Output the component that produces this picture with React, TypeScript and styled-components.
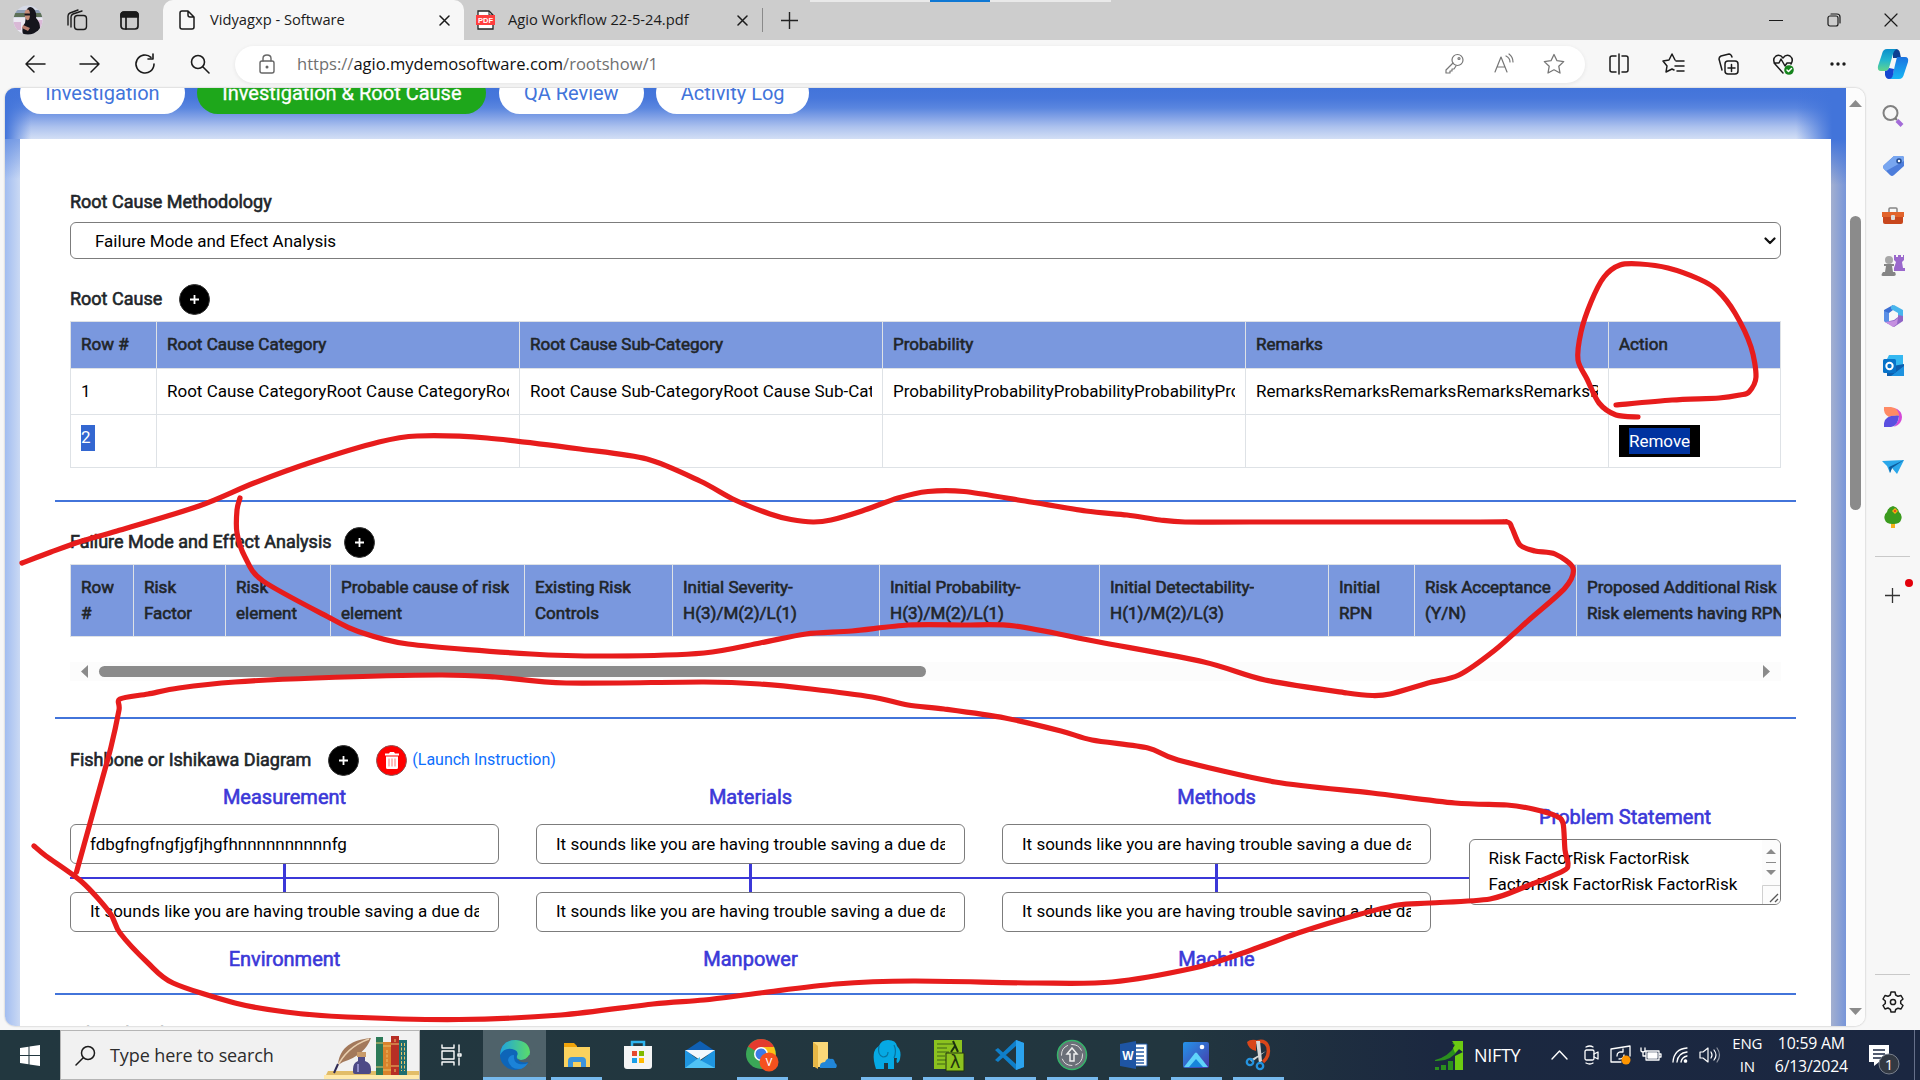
import React from "react";
import styled, { createGlobalStyle } from "styled-components";

const ui = `"Open Sans", "Noto Sans", sans-serif`;
const blue = "#4274da";
const ink = "#3b38d8";

const Global = createGlobalStyle`
  * { box-sizing: border-box; }
  html, body { margin: 0; padding: 0; overflow: hidden; }
  body { font-family: Roboto, "Liberation Sans", sans-serif; font-size: 17px; line-height: 26px; color: #212529; }
`;

const Screen = styled.div`
  position: relative;
  width: 1920px;
  height: 1080px;
  overflow: hidden;
  display: flex;
  flex-direction: column;
  background: #f7f7f7;
`;

/* ---------- browser chrome ---------- */
const TabStrip = styled.header`
  flex: none;
  height: 40px;
  background: #cdcdcd;
  display: flex;
  align-items: center;
  font-family: ${ui};
  color: #1b1b1b;
`;
const StripTools = styled.div`
  width: 163px;
  height: 40px;
  padding-left: 13px;
  display: flex;
  align-items: center;
  gap: 23px;
  svg:last-child { margin-left: 8px; }
`;
const Tab = styled.div<{ $w: number; $active?: boolean }>`
  width: ${(p) => p.$w}px;
  height: 40px;
  display: flex;
  align-items: center;
  padding: 0 14px 0 ${(p) => (p.$active ? 14 : 12)}px;
  background: ${(p) => (p.$active ? "#f7f7f7" : "transparent")};
  border-radius: 10px 10px 0 0;
  svg { flex: none; }
`;
const TabTitle = styled.span`
  flex: 1;
  margin: -2px 0 0 13px;
  font-size: 14.7px;
  white-space: nowrap;
`;
const StripRule = styled.div`
  width: 1px;
  height: 24px;
  margin-right: 18px;
  background: #8a8a8a;
`;
const LoadBar = styled.div`
  align-self: flex-start;
  width: 301px;
  height: 2px;
  margin-left: 12px;
  background: linear-gradient(to right, #e9e9e9 120px, #0f78d4 120px 180px, #e9e9e9 180px);
`;
const WindowKeys = styled.div`
  margin-left: auto;
  padding-right: 22px;
  display: flex;
  align-items: center;
  gap: 43.5px;
`;
const Toolbar = styled.div`
  flex: none;
  height: 48px;
  display: flex;
  align-items: center;
  background: #f7f7f7;
  font-family: ${ui};
`;
const NavKeys = styled.div`
  width: 235px;
  padding-left: 24px;
  display: flex;
  align-items: center;
  gap: 33px;
`;
const Address = styled.div`
  width: 1350px;
  height: 37px;
  border-radius: 19px;
  background: #fff;
  box-shadow: 0 1px 4px rgba(0, 0, 0, 0.08);
  display: flex;
  align-items: center;
  padding: 0 20px 0 22px;
`;
const Url = styled.span`
  flex: 1;
  margin-left: 20px;
  font-size: 16.55px;
  color: #707070;
  b { font-weight: 400; color: #111; }
`;
const AddressTools = styled.div`
  display: flex;
  gap: 28px;
`;
const ToolKeys = styled.div`
  margin-left: auto;
  display: grid;
  grid-template-columns: repeat(6, 54.7px);
  align-items: center;
  justify-items: center;
`;

/* ---------- middle ---------- */
const Middle = styled.div`
  flex: none;
  height: 942px;
  display: flex;
  padding-left: 5px;
`;
const Viewport = styled.main`
  width: 1860px;
  height: 938px;
  border-radius: 10px;
  overflow: hidden;
  display: flex;
  background: #fff;
  box-shadow: 0 0 2px rgba(0, 0, 0, 0.3);
`;
const Page = styled.div`
  width: 1841px;
  height: 938px;
  overflow: hidden;
`;
const TopBand = styled.div`
  height: 51px;
  background:
    linear-gradient(to right, ${blue} 0, rgba(66, 116, 218, 0) 26px),
    linear-gradient(to left, ${blue} 14px, rgba(66, 116, 218, 0.75) 24px, rgba(66, 116, 218, 0) 50px),
    linear-gradient(to bottom, ${blue} 0, #4777db 10px, #5a86df 20px, #81a1e6 29px, #adc2ee 39px, #d3dff5 51px);
`;
const Pills = styled.nav`
  height: 26px;
  padding-left: 15px;
  display: flex;
  align-items: flex-end;
  gap: 12.4px;
  overflow: hidden;
`;
const Pill = styled.div<{ $w: number; $on?: boolean }>`
  flex: none;
  width: ${(p) => p.$w}px;
  height: 42px;
  border-radius: 21px;
  display: flex;
  align-items: center;
  justify-content: center;
  font-size: 20px;
  white-space: nowrap;
  background: ${(p) => (p.$on ? "#1ea71b" : "#fff")};
  color: ${(p) => (p.$on ? "#fff" : blue)};
  -webkit-text-stroke: ${(p) => (p.$on ? 0.3 : 0)}px currentColor;
`;
const Body = styled.div`
  display: flex;
  height: 887px;
`;
const Edge = styled.div<{ $side: "l" | "r" }>`
  width: 15px;
  background: ${(p) =>
    p.$side === "l"
      ? "linear-gradient(to bottom, rgba(66,116,218,.55) 0, rgba(66,116,218,0) 40px), linear-gradient(to right, #a2bdf0, #cad9f4)"
      : `linear-gradient(to bottom, ${blue} 0, rgba(66,116,218,0) 46px), linear-gradient(to right, #a3b0d0, #7795d9)`};
`;
const Card = styled.section`
  width: 1811px;
  background: #fff;
  padding: 50px 35px 0;
`;
const Part = styled.div<{ $h: number; $top?: number }>`
  height: ${(p) => p.$h}px;
  padding: ${(p) => p.$top ?? 0}px 15px 0;
`;
const Rule = styled.div`
  height: 2px;
  background: ${blue};
`;
const Heading = styled.div`
  font-size: 18px;
  color: #212529;
  -webkit-text-stroke: 0.6px currentColor;
  white-space: nowrap;
`;
const HeadRow = styled.div`
  display: flex;
  align-items: center;
  height: 30px;
`;
const Round = styled.div<{ $ml: number; $red?: boolean }>`
  width: 31px;
  height: 31px;
  margin-left: ${(p) => p.$ml}px;
  border-radius: 50%;
  border: 1px solid ${(p) => (p.$red ? "#8d5555" : "#333")};
  background: ${(p) => (p.$red ? "#f00" : "#000")};
  display: flex;
  align-items: center;
  justify-content: center;
`;
const Launch = styled.a`
  margin-left: 5px;
  color: #0d6efd;
  font-size: 16px;
`;
const Select = styled.div`
  height: 37px;
  margin: 7px 0 25px;
  border: 1px solid #7c7c7c;
  border-radius: 6px;
  display: flex;
  align-items: center;
  justify-content: space-between;
  padding: 0 4px 0 24px;
  color: #000;
`;
const Grid = styled.div<{ $cols: string; $top: number }>`
  display: grid;
  grid-template-columns: ${(p) => p.$cols};
  margin-top: ${(p) => p.$top}px;
  border-left: 1px solid #dee2e6;
  border-top: 1px solid #dee2e6;
  overflow: hidden;
`;
const Cell = styled.div<{ $h: number; $head?: boolean; $top?: boolean }>`
  height: ${(p) => p.$h}px;
  min-width: 0;
  padding: ${(p) => (p.$top ? "10px 10px 0" : "0 10px 2px")};
  border-right: 1px solid #dee2e6;
  border-bottom: 1px solid #dee2e6;
  display: flex;
  align-items: ${(p) => (p.$top ? "flex-start" : "center")};
  background: ${(p) => (p.$head ? "#7a98de" : "#fff")};
  color: ${(p) => (p.$head ? "#212529" : "#000")};
  -webkit-text-stroke: ${(p) => (p.$head ? 0.6 : 0)}px currentColor;
`;
const Clip = styled.span`
  overflow: hidden;
  white-space: nowrap;
`;
const Picked = styled.span`
  width: 14px;
  height: 26px;
  line-height: 25px;
  background: #3367d1;
  color: #fff;
`;
const Remove = styled.button`
  width: 81px;
  height: 32px;
  padding: 0;
  border: 0;
  background: #000;
  font: inherit;
  color: #fff;
  span { display: inline-block; height: 26px; background: #0033a0; }
`;
const HScroll = styled.div`
  height: 19px;
  margin-top: 25px;
  padding: 0 11px;
  display: flex;
  align-items: center;
  background: #fcfcfc;
`;
const HThumb = styled.div`
  width: 827px;
  height: 11px;
  margin: 0 auto 0 11px;
  border-radius: 6px;
  background: #8b8b8b;
`;
const Fish = styled.div`
  display: flex;
  margin-top: 9px;
`;
const Bones = styled.div`
  width: 1399px;
`;
const Triple = styled.div<{ $h: number }>`
  height: ${(p) => p.$h}px;
  display: grid;
  grid-template-columns: repeat(3, 429px);
  column-gap: 37px;
`;
const Label = styled.div`
  font-size: 20px;
  line-height: 26px;
  text-align: center;
  color: ${ink};
  -webkit-text-stroke: 0.6px currentColor;
`;
const Field = styled.div<{ $lift?: boolean }>`
  height: 40px;
  border: 1px solid #7c7c7c;
  border-radius: 6px;
  padding: ${(p) => (p.$lift ? 5 : 6)}px 19px;
  color: #000;
  display: flex;
`;
const Spine = styled.div`
  height: 28px;
  display: grid;
  grid-template-columns: repeat(3, 429px);
  column-gap: 37px;
  background: linear-gradient(${ink}, ${ink}) 0 13px / 100% 2px no-repeat;
`;
const Rib = styled.div`
  justify-self: center;
  width: 3px;
  background: ${ink};
`;
const Head = styled.div`
  width: 312px;
  padding-top: 20px;
`;
const Area = styled.div`
  display: flex;
  height: 66px;
  margin-top: 9px;
  border: 1px solid #7c7c7c;
  border-radius: 6px;
  overflow: hidden;
  color: #000;
`;
const AreaText = styled.div`
  width: 292px;
  padding: 4.5px 0 0 18.5px;
`;
const AreaBar = styled.div`
  width: 18px;
  height: 64px;
  background: #fcfcfc;
`;
const VScroll = styled.div`
  width: 19px;
  background: #fcfcfc;
  display: flex;
  flex-direction: column;
  align-items: center;
  padding: 12px 0 11px;
`;
const VThumb = styled.div`
  flex: none;
  width: 11px;
  height: 294px;
  margin: 109px 0 auto;
  border-radius: 6px;
  background: #8b8b8b;
`;
const Sidebar = styled.aside`
  width: 55px;
  display: flex;
  flex-direction: column;
  align-items: center;
  padding-top: 16px;
`;
const SideItem = styled.div`
  flex: none;
  height: 24px;
  margin-bottom: 26.1px;
`;
const SideRule = styled.div<{ $top: number; $bottom: number }>`
  flex: none;
  width: 35px;
  height: 1px;
  margin: ${(p) => p.$top}px 0 ${(p) => p.$bottom}px;
  background: #c9c9c9;
`;
const AddItem = styled.div`
  position: relative;
  flex: none;
  width: 15px;
  height: 15px;
  svg { display: block; }
  &::after {
    content: "";
    position: absolute;
    top: -9px;
    left: 20px;
    width: 8px;
    height: 8px;
    border-radius: 50%;
    background: #e3000b;
  }
`;

/* ---------- taskbar ---------- */
const Taskbar = styled.footer`
  flex: none;
  height: 50px;
  display: flex;
  align-items: center;
  background: linear-gradient(to right, #22373f 0, #22363f 1180px, #1b2840 1440px, #1b2741);
  font-family: ${ui};
  color: #fff;
`;
const Start = styled.div`
  width: 60px;
  display: flex;
  justify-content: center;
`;
const SearchBox = styled.div`
  width: 360px;
  height: 50px;
  background: #f1f1f1;
  border: 1px solid #b5b5b5;
  display: flex;
  align-items: center;
  padding-left: 14px;
  color: #2c2c2c;
  font-size: 18px;
  span { margin-left: 14px; flex: 1; letter-spacing: -0.1px; white-space: nowrap; }
`;
const Task = styled.div<{ $w?: number; $open?: boolean; $hot?: boolean }>`
  flex: none;
  width: ${(p) => p.$w ?? 62}px;
  height: 50px;
  display: flex;
  align-items: center;
  justify-content: center;
  background:
    linear-gradient(#76b9ed, #76b9ed) 50% 100% / ${(p) => (p.$hot ? "100%" : "51px")} ${(p) => (p.$open ? 3 : 0)}px no-repeat,
    ${(p) => (p.$hot ? "#4f626a" : "transparent")};
`;
const Ticker = styled.div`
  margin-left: 146px;
  display: flex;
  align-items: center;
  gap: 10px;
  font-size: 18px;
  span { letter-spacing: -0.3px; }
`;
const Tray = styled.div`
  margin-left: 31px;
  display: flex;
  align-items: center;
  gap: 8.6px;
  svg:first-child { margin-right: 4px; }
`;
const Stack = styled.div<{ $w: number; $ml: number; $size: number }>`
  flex: none;
  width: ${(p) => p.$w}px;
  margin-left: ${(p) => p.$ml}px;
  text-align: center;
  font-size: ${(p) => p.$size}px;
  line-height: 23px;
  letter-spacing: -0.2px;
  white-space: nowrap;
`;
const Notice = styled.div`
  margin-left: auto;
  margin-right: 5px;
  height: 50px;
  width: 46px;
  border-right: 1px solid #66708a;
`;
const Ink = styled.svg`
  position: absolute;
  inset: 0;
  pointer-events: none;
`;

/* ---------- drawings ---------- */
type IcoProps = { w?: number; h?: number; c?: string; s?: number; box?: string; children: React.ReactNode };
const Ico = ({ w = 20, h = w, c = "#1b1b1b", s = 1.4, box, children }: IcoProps) => (
  <svg width={w} height={h} viewBox={box ?? `0 0 ${w} ${h}`} fill="none" stroke={c} strokeWidth={s} strokeLinecap="round" strokeLinejoin="round">
    {children}
  </svg>
);
const Plus = ({ size = 9, c = "#fff", s = 1.8 }) => (
  <Ico w={size} c={c} s={s}><path strokeLinecap="butt" d={`M${size / 2} 0V${size}M0 ${size / 2}H${size}`} /></Ico>
);
const Cross = () => <Ico w={11} s={1.5}><path d="M1 1l9 9M10 1l-9 9" /></Ico>;
const Arrow = ({ dir }: { dir: "u" | "d" | "l" | "r" }) => {
  const d = { u: "M6.5 0L13 7H0z", d: "M6.5 7L13 0H0z", l: "M0 6.5L7 0V13z", r: "M7 6.5L0 0V13z" }[dir];
  const flat = dir === "u" || dir === "d";
  return <svg width={flat ? 13 : 7} height={flat ? 7 : 13}><path d={d} fill="#8b8b8b" /></svg>;
};
const Avatar = () => (
  <svg width="30" height="30" viewBox="0 0 30 30">
    <defs><clipPath id="av"><circle cx="15" cy="15" r="14.5" /></clipPath></defs>
    <g clipPath="url(#av)">
      <path fill="#d5d9e6" d="M0 0h30v30H0z" />
      <path fill="#5d7158" d="M0 8h30v4H0z" /><path fill="#8fa0b8" d="M0 5h30v3H0z" /><path fill="#ece8f2" d="M0 13h30v17H0z" />
      <path fill="#d9b9d6" d="M0 17h8v8H0zM25 15h5v8h-5z" />
      <path fill="#15151c" d="M10 30q-2-8 2-12l2-14q3-4 7 0 3 4 2 9 4 4 4 10l-2 7z" />
      <path fill="#c58d78" d="M12 6c3-3 5-1 5 3s-1 7-3 6-3-6-2-9z" />
      <path fill="#15151c" d="M11.500 8.500h5.500v2h-5.500z" /><path fill="#b97e6e" d="M10 20l7 3-2 3-6-3z" />
    </g>
  </svg>
);

const Trash = () => (
  <svg width="14" height="17" viewBox="0 0 14 17">
    <path fill="#fff" d="M0 1.5h4L5 0h4l1 1.5h4v2H0zM1 4.5h12V15.5Q13 17 11.500 17h-9Q1 17 1 15.500z" />
    <path stroke="#f77" d="M4 6.500v8M7 6.500v8M10 6.500v8" />
  </svg>
);

const sideIcons: React.ReactNode[] = [
  <><circle cx="9.500" cy="9" r="7" fill="none" stroke="#808080" strokeWidth="2" /><path d="M14 14l2 2" stroke="#777" strokeWidth="2" /><path d="M16 16.500l5 5" stroke="#a36bd8" strokeWidth="4" /></>,
  <><path fill="#4d7ddb" d="M13 2h8q2 0 2 2v8L13 21q-2 2-4 0l-6-6q-2-2 0-4z" /><path fill="#78a6f0" d="M13 2h8q2 0 2 2v3L5 17l-2-2q-2-2 0-4z" /><circle cx="18" cy="7" r="2" fill="#fff" stroke="#234b91" strokeWidth="1.500" /></>,
  <><path d="M8 8V5q0-1 1-1h6q1 0 1 1v3" fill="none" stroke="#858585" strokeWidth="1.500" /><path fill="#e2642c" d="M1 8h22v5H1z" /><path fill="#c8471d" d="M2 13h20v5q0 2-2 2H4q-2 0-2-2z" /><rect x="10" y="11" width="4" height="5" rx="1" fill="#ddd" /></>,
  <><circle cx="8" cy="6" r="4" fill="#a7a7a7" /><path fill="#858585" d="M3 10h10v2h-2l1 6h2q2 4-1 4H2q-3 0 0-4h2l1-6H3z" /><path fill="#9a68cc" d="M13 1h2v2h2V1h3v2h2V1h1v5l-2 2 1 6h2v3H13v-3l2-6-2-2z" /></>,
  <><path fill="#3c6fd3" d="M12 1L3 6v11l5 3V9l4-3z" /><path fill="#48b5ed" d="M10 2l3-1 9 5v8l-5-3V9l-7-4z" /><path fill="#9065c6" d="M22 12v5l-9 6-9-5 9-2 4-3v-2z" /><path fill="#5a8fe6" d="M3 7l5 2v11l-5-3z" /><path fill="#c58fe0" d="M4 18l9-1 4-3-1 6-4 3z" /></>,
  <><path fill="#35b8f1" d="M8 1h14v20H6V5z" /><path fill="#0f5fae" d="M6 13l17-3v12H6z" /><path fill="#1e92df" d="M10 22l13-10v10z" /><rect x="2" y="5" width="13" height="14" rx="1.500" fill="#0873c9" /><circle cx="8.500" cy="12" r="3.200" fill="none" stroke="#fff" strokeWidth="2" /></>,
  <><path fill="#ff8a65" d="M3 2h7q8 1 10 9-9-1-12 1Q2 9 3 2z" /><path fill="#d548d8" d="M14 3q7 3 7 9 0 7-8 10 5-6 5-11 0-5-4-8z" /><path fill="#5a4fe0" d="M3 22q-1-9 7-11 8-1 8 0-1 10-8 11z" /></>,
  <><path fill="#2aa7ea" d="M1 6l22-1-7 14-5-6-2 5-3-7z" /><path fill="#0e5c9e" d="M23 5L8 12l1 6 2-5z" /></>,
  <><path fill="#f7b21b" d="M10 17h4v6h-4z" /><path fill="#3b9b1e" d="M12 1q5 1 6 6 4 3 2 8-1 4-8 4t-8-4q-2-5 2-8 1-5 6-6z" /><path fill="#f5b80f" d="M14 3l3 3-3 3-3-3z" /><circle cx="14" cy="6" r="1.300" fill="#e8501f" /></>,
];

type Pt = [number, number];
const smooth = (pts: Pt[]) => {
  let d = `M${pts[0][0]} ${pts[0][1]}`;
  for (let i = 0; i < pts.length - 1; i++) {
    const a = pts[i - 1] ?? pts[i], b = pts[i], c = pts[i + 1], e = pts[i + 2] ?? c;
    d += `C${b[0] + (c[0] - a[0]) / 7} ${b[1] + (c[1] - a[1]) / 7} ${c[0] - (e[0] - b[0]) / 7} ${c[1] - (e[1] - b[1]) / 7} ${c[0]} ${c[1]}`;
  }
  return d;
};
const strokes: Pt[][] = [
  [[1616, 405], [1672, 400], [1719, 398], [1740, 395], [1749, 392], [1756, 377], [1751, 347], [1735, 313], [1717, 290], [1699, 279], [1668, 268], [1640, 264], [1620, 265], [1604, 277], [1591, 302], [1581, 332], [1578, 360], [1587, 379], [1599, 403], [1616, 415], [1638, 417]],
  [[22, 563], [51, 552], [82, 541], [117, 531], [199, 506], [254, 483], [312, 462], [379, 442], [417, 436], [487, 438], [580, 449], [647, 459], [700, 481], [735, 500], [770, 514], [791, 519.500], [813, 522], [831, 520], [862, 511], [898, 498], [928, 491.500], [964, 491.500], [1025, 501], [1086, 511], [1127, 515], [1160, 520], [1185, 522], [1250, 522], [1480, 522], [1507, 522], [1512, 528], [1520, 545], [1535, 551], [1555, 554], [1573, 568], [1565, 588], [1530, 619], [1495, 650], [1459, 675], [1428, 683], [1390, 694], [1372, 695.500], [1347, 693], [1265, 680], [1204, 662], [1099, 642], [1015, 626], [964, 625], [908, 625], [852, 631], [806, 634], [760, 643], [704, 653], [612, 656], [531, 654], [408, 644], [357, 631], [332, 619], [263, 581], [245, 557], [237, 533], [237, 510], [240, 498]],
  [[76.500, 872], [89, 827], [102, 780], [111, 747], [119, 710], [120, 699], [148, 694], [179, 688], [235, 682], [316, 678], [439, 675], [495, 677], [566, 683], [704, 682], [760, 684], [811, 689], [872, 697], [908, 705], [944, 709], [1005, 718], [1061, 731], [1092, 740], [1148, 748], [1178, 760], [1275, 782], [1372, 793], [1455, 803], [1507, 805], [1533, 809], [1556, 816], [1563, 823], [1565, 850], [1568, 864], [1563, 871], [1527, 886], [1490, 899], [1430, 903], [1398, 905], [1357, 915], [1301, 932], [1240, 954], [1194, 968], [1112, 982], [1035, 983], [913, 981], [836, 984], [760, 993], [704, 1000], [653, 1004], [561, 1015], [459, 1019.500], [347, 1017], [286, 1012], [235, 1003], [173, 983], [148, 963], [120, 933], [110, 913], [82, 882], [46, 856], [34, 846]],
];

const rep = (s: string, n: number) => s.repeat(n);
const due = "It sounds like you are having trouble saving a due date";
const fmea: [string, string][] = [
  ["Row", "#"], ["Risk", "Factor"], ["Risk", "element"], ["Probable cause of risk", "element"], ["Existing Risk", "Controls"],
  ["Initial Severity-", "H(3)/M(2)/L(1)"], ["Initial Probability-", "H(3)/M(2)/L(1)"], ["Initial Detectability-", "H(1)/M(2)/L(3)"],
  ["Initial", "RPN"], ["Risk Acceptance", "(Y/N)"], ["Proposed Additional Risk", "Risk elements having RPN"],
];

const T = ({ children }: { children: React.ReactNode }) => <svg width="38" height="38" viewBox="0 0 38 38">{children}</svg>;

export default function App() {
  return (
    <Screen>
      <Global />
      <TabStrip>
        <StripTools>
          <Avatar />
          <Ico w={23}><rect x="8.500" y="6.500" width="12" height="14" rx="3" /><path d="M5 18V8q0-2 2-3l9-3M2 16V7q0-2 2-3l8-3" /></Ico>
          <Ico w={19} s={1.7}><rect x="1" y="1" width="17" height="17" rx="3" /><path d="M1 4q0-3 3-3h11q3 0 3 3v2H1z" fill="#1b1b1b" /><path d="M6 6v12" /></Ico>
        </StripTools>
        <Tab $w={301} $active>
          <Ico w={20} h={20} s={1.5}><path d="M3 3q0-2 2-2h6l6 6v10q0 2-2 2H5q-2 0-2-2zM11 1v4q0 2 2 2h4" /></Ico>
          <TabTitle>Vidyagxp - Software</TabTitle>
          <Cross />
        </Tab>
        <Tab $w={298}>
          <svg width="19" height="20"><path d="M2 1h11l4 4v14H2z" fill="#fff" stroke="#222" strokeWidth="1.300" /><path d="M13 1v4h4" stroke="#222" fill="none" /><path fill="#ff3e3e" d="M0 5h19v10H0z" /><text x="2" y="13" fontSize="7.500" fontWeight="700" fontFamily="Liberation Sans" fill="#fff">PDF</text></svg>
          <TabTitle>Agio Workflow 22-5-24.pdf</TabTitle>
          <Cross />
        </Tab>
        <StripRule />
        <Plus size={17} c="#222" s={1.4} />
        <LoadBar />
        <WindowKeys>
          <Ico w={14} s={1}><path d="M0 7.500h14" /></Ico>
          <Ico w={14} s={1.200}><rect x="1" y="3" width="10" height="10" rx="2" /><path d="M4 1h6q3 0 3 3v6" /></Ico>
          <Ico w={14} s={1.200}><path d="M1 1l12 12M13 1L1 13" /></Ico>
        </WindowKeys>
      </TabStrip>
      <Toolbar>
        <NavKeys>
          <Ico w={22} s={1.500}><path d="M21 11H2M10 3l-8 8 8 8" /></Ico>
          <Ico w={22} s={1.500}><path d="M1 11h19M12 3l8 8-8 8" /></Ico>
          <Ico w={22} s={1.600}><path d="M20 11a9 9 0 1 1-3-6.700M19 1v5h-5" /></Ico>
          <Ico w={22} s={1.600}><circle cx="9" cy="9" r="6.500" /><path d="M14 14l6 6" /></Ico>
        </NavKeys>
        <Address>
          <Ico w={20} c="#666" s={1.400}><rect x="3" y="7" width="14" height="12" rx="2" /><path d="M6 7V4.500Q6 1 10 1t4 3.500V7" /><circle cx="10" cy="13" r=".8" fill="#666" /></Ico>
          <Url>https://<b>agio.mydemosoftware.com</b>/rootshow/1</Url>
          <AddressTools>
            <Ico w={21} c="#767676" s={1.200}><circle cx="13.500" cy="7" r="5.500" /><circle cx="15" cy="5.500" r="1" /><path d="M9 10l-7 7v3h4v-2h2v-2h2l2-3" /></Ico>
            <Ico w={22} c="#767676" s={1.200}><path d="M2 19L8 4l6 15M4.500 14h7M13 3q4 2 4 6M16 1q4 3 4 8" /></Ico>
            <Ico w={22} c="#767676" s={1.300}><path d="M11 1.500l3 6.200 6.700.9-4.900 4.700 1.200 6.700-6-3.200-6 3.200 1.200-6.700L1.300 8.600l6.700-.9z" /></Ico>
          </AddressTools>
        </Address>
        <ToolKeys>
          <Ico w={22} s={1.500}><path d="M8 3H4Q2 3 2 5v12q0 2 2 2h4M14 3h4q2 0 2 2v12q0 2-2 2h-4M11 1v20" /></Ico>
          <Ico w={23} s={1.500}><path d="M12 17l-2-1-6 3 1-6-4-5 6-1 3-6 3 6M14 8h8M13 13h9M15 18h7" /></Ico>
          <Ico w={23} s={1.500}><rect x="8" y="8" width="13" height="13" rx="3" /><path d="M14.500 11.500v7M11 15h7M5 17L2 6q0-2 2-3l8-2q2 0 3 3" /></Ico>
          <Ico w={23} s={1.500}><path d="M11 20l-8-9Q0 6 4 3q4-2 7 2 3-4 7-2 4 3 1 8M2 10h5l2-4 4 7 2-3h4" /><circle cx="17" cy="17" r="4.800" fill="#15831c" stroke="none" /><path stroke="#fff" d="M15 17l1.500 1.500 3-3" /></Ico>
          <Ico w={20}><g fill="#1b1b1b" stroke="none"><circle cx="4" cy="10" r="1.700" /><circle cx="10" cy="10" r="1.700" /><circle cx="16" cy="10" r="1.700" /></g></Ico>
          <svg width="32" height="30" viewBox="0 0 32 30">
            <defs>
              <linearGradient id="cpA" x1="0" y1="0" x2="0" y2="1"><stop offset="0" stopColor="#0a8ecb" /><stop offset=".5" stopColor="#22b5cf" /><stop offset="1" stopColor="#62d58c" /></linearGradient>
              <linearGradient id="cpB" x1="0" y1="0" x2="0" y2="1"><stop offset="0" stopColor="#1b73e0" /><stop offset="1" stopColor="#18b6f4" /></linearGradient>
            </defs>
            <path fill="#0d3f91" d="M16 0h3q3 0 4 4l1 5h-8z" />
            <path fill="url(#cpA)" d="M10 0h10q-3 1-4 5l-4 14q-1 3-4 3H4q-4 0-3-5L5 5q1-5 5-5z" />
            <path fill="url(#cpB)" d="M20 8h8q4 0 3 5l-4 12q-1 5-5 5H12q3-1 4-5l2-9z" />
            <path fill="#1547d1" d="M8 22q3 0 4-3l5 1-1 6q-1 4-4 4-3 0-4-4z" />
          </svg>
        </ToolKeys>
      </Toolbar>

      <Middle>
        <Viewport>
          <Page>
            <TopBand>
              <Pills>
                <Pill $w={165}>Investigation</Pill>
                <Pill $w={289} $on>Investigation &amp; Root Cause</Pill>
                <Pill $w={145}>QA Review</Pill>
                <Pill $w={153}>Activity Log</Pill>
              </Pills>
            </TopBand>
            <Body>
              <Edge $side="l" />
              <Card>
                <Part $h={311}>
                  <Heading>Root Cause Methodology</Heading>
                  <Select>
                    Failure Mode and Efect Analysis
                    <Ico w={12} h={8} s={2.200} c="#111"><path d="M1.500 1.500L6 6l4.500-4.500" /></Ico>
                  </Select>
                  <HeadRow><Heading>Root Cause</Heading><Round $ml={17}><Plus /></Round></HeadRow>
                  <Grid $top={7} $cols="86px 363px 363px 363px 363px 172px">
                    {["Row #", "Root Cause Category", "Root Cause Sub-Category", "Probability", "Remarks", "Action"].map((t) => (
                      <Cell key={t} $h={47} $head>{t}</Cell>
                    ))}
                    <Cell $h={46}>1</Cell>
                    <Cell $h={46}><Clip>{rep("Root Cause Category", 4)}</Clip></Cell>
                    <Cell $h={46}><Clip>{rep("Root Cause Sub-Category", 3)}</Clip></Cell>
                    <Cell $h={46}><Clip>{rep("Probability", 6)}</Clip></Cell>
                    <Cell $h={46}><Clip>{rep("Remarks", 7)}</Clip></Cell>
                    <Cell $h={46} />
                    <Cell $h={53} $top><Picked>2</Picked></Cell>
                    <Cell $h={53} /><Cell $h={53} /><Cell $h={53} /><Cell $h={53} />
                    <Cell $h={53} $top><Remove><span>Remove</span></Remove></Cell>
                  </Grid>
                </Part>
                <Rule />
                <Part $h={215} $top={25}>
                  <HeadRow><Heading>Failure Mode and Effect Analysis</Heading><Round $ml={12.5}><Plus /></Round></HeadRow>
                  <Grid $top={7} $cols="63px 92px 105px 194px 148px 207px 220px 229px 86px 162px 320px">
                    {fmea.map(([a, b], i) => (
                      <Cell key={i} $h={72} $head><Clip>{a}<br />{b}</Clip></Cell>
                    ))}
                  </Grid>
                  <HScroll><Arrow dir="l" /><HThumb /><Arrow dir="r" /></HScroll>
                </Part>
                <Rule />
                <Part $h={274} $top={26}>
                  <HeadRow>
                    <Heading>Fishbone or Ishikawa Diagram</Heading>
                    <Round $ml={17}><Plus /></Round>
                    <Round $ml={17} $red><Trash /></Round>
                    <Launch>(Launch Instruction)</Launch>
                  </HeadRow>
                  <Fish>
                    <Bones>
                      <Triple $h={40}><Label>Measurement</Label><Label>Materials</Label><Label>Methods</Label></Triple>
                      <Triple $h={40}>
                        <Field><Clip>fdbgfngfngfjgfjhgfhnnnnnnnnnnfg</Clip></Field>
                        <Field><Clip>{due}</Clip></Field>
                        <Field><Clip>{due}</Clip></Field>
                      </Triple>
                      <Spine><Rib /><Rib /><Rib /></Spine>
                      <Triple $h={54}>
                        <Field $lift><Clip>{due}</Clip></Field>
                        <Field $lift><Clip>{due}</Clip></Field>
                        <Field $lift><Clip>{due}</Clip></Field>
                      </Triple>
                      <Triple $h={26}><Label>Environment</Label><Label>Manpower</Label><Label>Machine</Label></Triple>
                    </Bones>
                    <Head>
                      <Label>Problem Statement</Label>
                      <Area>
                        <AreaText>Risk FactorRisk FactorRisk<br />FactorRisk FactorRisk FactorRisk<br />FactorRisk FactorRisk FactorRisk</AreaText>
                        <AreaBar>
                          <svg width="18" height="64"><path fill="#8b8b8b" d="M9 9l5 5H4zM9 35l5-5H4zM4 22h10v1H4z" /><path stroke="#d0d0d0" fill="none" d="M.5 64V45.500h18" /><path stroke="#555" strokeWidth="1.300" d="M8 62l8-8M13 62l3-3" /></svg>
                        </AreaBar>
                      </Area>
                    </Head>
                  </Fish>
                </Part>
                <Rule />
                <Part $h={60} $top={26}><Heading>Why-Why Chart</Heading></Part>
              </Card>
              <Edge $side="r" />
            </Body>
          </Page>
          <VScroll><Arrow dir="u" /><VThumb /><Arrow dir="d" /></VScroll>
        </Viewport>
        <Sidebar>
          {sideIcons.map((g, i) => (
            <SideItem key={i}><svg width="24" height="24" viewBox="0 0 24 24">{g}</svg></SideItem>
          ))}
          <SideRule $top={1} $bottom={31} />
          <AddItem><Plus size={15} c="#333" s={1.300} /></AddItem>
          <SideRule $top={371} $bottom={16} />
          <Ico w={22} s={1.500}><path d="M9 1h4l.7 3 2.300 1.300L19 4.500l2 3.500-2.300 2v2.500L21 14.500 19 18l-3-.8-2.300 1.300L13 21H9l-.7-2.700L6 17l-3 1-2-3.500L3.300 12.500V10L1 8l2-3.500L6 5.300 8.300 4z" /><circle cx="11" cy="11" r="2.600" /></Ico>
        </Sidebar>
      </Middle>

      <Taskbar>
        <Start><svg width="20" height="21" viewBox="0 0 20 21"><path fill="#fff" d="M0 3l8.500-1.300V10H0zM9.500 1.500L20 0v10H9.500zM0 11h8.500v8.300L0 18zM9.500 11H20v10L9.500 19.500z" /></svg></Start>
        <SearchBox>
          <Ico w={21} s={1.500}><circle cx="13" cy="8" r="6.500" /><path d="M8 13l-7 7" /></Ico>
          <span>Type here to search</span>
          <svg width="95" height="48" viewBox="0 0 95 48">
            <path fill="#e2bd68" d="M4 40h91v8H0z" /><path fill="#ffe9ab" d="M0 44h95v4H0z" />
            <path fill="#a3795b" d="M14 34C15 20 24 9 47 7q-6 17-28 24z" /><path d="M45 8Q22 16 12 38" stroke="#e9cfae" strokeWidth="1.500" fill="none" /><path d="M14 33l-4 9" stroke="#2e2a55" strokeWidth="2" />
            <path fill="#c89b6b" d="M33 21h9v5h-9z" /><path fill="#4d4a86" d="M34 26h7v4q6 2 6 8v3q0 2-2 2H31q-2 0-2-2v-3q0-6 5-8z" /><path stroke="#8f8cc9" d="M34 33v8" strokeWidth="2" />
            <path fill="#2c7a58" d="M52 6h7v38h-7z" /><path fill="#d9822b" d="M59 11h8v33h-8z" /><path fill="#b72e25" d="M67 5h8v39h-8z" /><path fill="#1f6d6f" d="M75 9h8v35h-8z" />
            <path stroke="#eac36a" d="M52 12h7M52 36h7M59 15h8M59 39h8M67 13h8M67 35h8" /><path stroke="#eac36a" d="M63 19v17M71 8v3M71 38v4M77.500 12v28M80.500 12v28" strokeDasharray="3 1.500" />
          </svg>
        </SearchBox>
        <Task $w={63}><Ico w={22} c="#fff" s={1.400}><path d="M1 1v3h12V1M1 21v-3h12v3M1 7h12v8H1zM18 1v7M18 14v7M17 10h3v2h-3z" /></Ico></Task>
        <Task $w={63} $hot $open><T>
          <defs><linearGradient id="ed" x1="0" y1="0" x2="1" y2="0"><stop offset="0" stopColor="#1fa2e0" /><stop offset="1" stopColor="#5bdc68" /></linearGradient></defs>
          <circle cx="19" cy="19" r="15" fill="#0e65b8" /><path fill="url(#ed)" d="M4 19Q5 4 20 4q13 1 14 12 0 8-9 8-5 0-4-4 2-4-2-6-10-4-15 5z" /><path fill="#4f626a" d="M21 21q1 7 12 5l3 4V19l-3 0q-3 5-8 5-3 0-4-3z" /><path fill="#1b83d8" d="M12 24q2 9 11 9 5 0 9-6-4 2-9 1-6-2-5-9-5 0-6 5z" /></T></Task>
        <Task $w={61} $open><T><path fill="#f0a30a" d="M6 7h10l3 3v4H6z" /><path fill="#fbd25e" d="M6 11h26v20H6z" /><path fill="#3b94dc" d="M10 31v-6q0-4 4-4h10q4 0 4 4v6h-5v-5h-8v5z" /></T></Task>
        <Task><T><path d="M13 10V6h12v4" fill="none" stroke="#2fb4ee" strokeWidth="2.500" /><path fill="#f4f4f4" d="M5 10h28v20q0 3-3 3H8q-3 0-3-3z" /><path fill="#e5482d" d="M13 15h5v5h-5z" /><path fill="#7fba00" d="M20 15h5v5h-5z" /><path fill="#1a9fe8" d="M13 22h5v5h-5z" /><path fill="#ffb900" d="M20 22h5v5h-5z" /></T></Task>
        <Task><T><path fill="#0f5fb4" d="M4 15L19 5l15 10v4H4z" /><path fill="#1f95df" d="M4 14l15 11L34 14v18H4z" /><path fill="#f2f8fd" d="M4 14h30L19 24z" /><path fill="#50c3f5" d="M4 32l15-11v3L34 32z" /></T></Task>
        <Task $open><T><circle cx="18" cy="18" r="15" fill="#3aa757" /><path fill="#e33b2e" d="M18 18L5 10.500Q10 3 18 3q9 0 13 8H18z" /><path fill="#fbc116" d="M18 11h13q5 12-5 20l-8-13z" /><circle cx="18" cy="18" r="7" fill="#fff" /><circle cx="18" cy="18" r="5.500" fill="#3a7be8" /><circle cx="26" cy="26" r="9.500" fill="#f4511e" /><text x="26" y="30" fontSize="11" textAnchor="middle" fill="#fff" fontFamily="Roboto">V</text></T></Task>
        <Task><T><path fill="#fbd878" d="M8 6h15v25H8z" /><path fill="#e7b746" d="M8 6l5 4v23l-5-3z" /><path fill="#2186d8" d="M15 32q-1-6 5-6 2-5 6-3 3-1 4 4 3 2 1 5z" /></T></Task>
        <Task $open><T><path fill="#06a9e4" d="M9 33Q3 15 12 10q2-6 9-6 8 0 9 6 5 5 3 13-1 4-3 4-1-2 0-5h-3v11h-6v-6h-4v6z" /><path d="M12 10q-2 9 4 11 5 0 5-5M27 9q3 6 0 13" stroke="#0873a0" strokeWidth="1.200" fill="none" /></T></Task>
        <Task $open><T><path fill="#8cc21f" d="M5 4h28v29H5z" /><path stroke="#3f6417" d="M8 8h16M8 12h10M8 16h12M8 20h8M8 24h10M8 28h8" /><path d="M24 5l5 11M26 10l-4 6" stroke="#1c3010" strokeWidth="2" /><path fill="#8cc21f" stroke="#22340f" d="M17 17h18v18H17z" /><text x="26" y="32" textAnchor="middle" fontSize="18" fill="#22340f" fontFamily="DejaVu Sans">λ</text></T></Task>
        <Task $open><T><path fill="#0f7fc9" d="M4 14l3-2 18 16V10L7 26l-3-2 21-20 8 3v24l-8 3L4 14z" /><path fill="#2ba3ee" d="M25 4l8 3v24l-8 3z" /></T></Task>
        <Task $open><T><circle cx="19" cy="19" r="14.500" fill="#6b6f78" stroke="#35b56a" strokeWidth="1.500" /><circle cx="19" cy="19" r="10.500" fill="none" stroke="#ddd" strokeDasharray="13 3" /><path d="M19 12l5 6h-3v7h-4v-7h-3z" fill="none" stroke="#eee" strokeWidth="1.500" /></T></Task>
        <Task $open><T><path fill="#fff" stroke="#1c56a5" d="M18 8h14v22H18z" /><path d="M20 12h9M20 16h9M20 20h9M20 24h9M20 27h9" stroke="#2a5fa8" strokeWidth="1.500" /><path fill="#1e55a4" d="M5 8l16-3v28L5 30z" /><text x="13" y="24" textAnchor="middle" fontSize="12" fontWeight="700" fill="#fff" fontFamily="Liberation Sans">W</text></T></Task>
        <Task $open><T>
          <defs><linearGradient id="ph" x1="0" y1="0" x2="1" y2="1"><stop offset="0" stopColor="#2494ea" /><stop offset="1" stopColor="#473aa8" /></linearGradient></defs>
          <rect x="6" y="6" width="26" height="26" rx="2" fill="url(#ph)" /><path fill="#5fd3fa" d="M7 31l11-14q1-1 2 0l11 14z" /><path fill="#1785db" d="M12 31l7-8 7 8z" /><circle cx="25" cy="11" r="2.300" fill="#fff" /></T></Task>
        <Task $open><T><path d="M15 7q11-5 14 4 2 9-5 15" fill="none" stroke="#d8461a" strokeWidth="3.500" /><path fill="#d8461a" d="M8 6q3-3 9-2v11q-8-2-9-9z" /><path fill="#d7d7d7" d="M17 5h4l2 20-3 2zM27 15L13 26l-2-2z" /><circle cx="11" cy="26" r="3.200" fill="none" stroke="#2594e0" strokeWidth="2.300" /><circle cx="21" cy="30" r="3.200" fill="none" stroke="#2594e0" strokeWidth="2.300" /></T></Task>
        <Ticker>
          <svg width="29" height="29" viewBox="0 0 29 29"><path fill="#2a8f1e" d="M0 19Q13 16 20 5l-3-3 11-2v11l-4-3Q16 21 0 20zM0 26h4v3H0zM6 24h5v5H6zM13 20h5v9h-5z" /><path fill="#6ccb12" d="M17 0h11v11l-4-3-4 4-2-5 2-3zM20 15l8-4v18h-8z" /></svg>
          <span>NIFTY</span>
        </Ticker>
        <Tray>
          <Ico w={17} h={12} c="#fff"><path d="M1 10l7.500-8L16 10" /></Ico>
          <Ico w={20} c="#fff" s={1.300}><rect x="4" y="5" width="9" height="10" rx="1.500" /><path d="M13 9l4-2v7l-4-2M5 2q4-2 7 0M5 18q4 2 7 0" /></Ico>
          <Ico w={22} h={20} c="#fff" s={1.300}><path d="M11 17H1V4l19-3v10M7 11q0-5 6-4M13 4v3h-3M14 10q0 4-5 4" /><circle cx="16" cy="15" r="4.500" fill="#ff9500" stroke="none" /></Ico>
          <Ico w={22} h={16} c="#fff" s={1.300}><path d="M6 4h13v9H6zM20 7h1v3h-1M1 1v3q2 2 4 0V1M3 5v4h3" /><path fill="#fff" d="M8 6h9v5H8z" /></Ico>
          <Ico w={20} c="#fff" s={1.300}><path d="M2 17Q3 4 16 3M6 17q1-9 10-10M10 17q1-5 6-6" /><circle cx="14.500" cy="16" r="1.200" fill="#fff" /></Ico>
          <Ico w={22} h={18} c="#fff" s={1.200}><path d="M1 6h3l5-4v14l-5-4H1zM12 6q2 3 0 6M15 4q4 5 0 10" /><path opacity=".5" d="M18 2q5 7 0 14" /></Ico>
        </Tray>
        <Stack $w={38} $ml={7} $size={15}>ENG<br />IN</Stack>
        <Stack $w={80} $ml={5} $size={15.8}>10:59 AM<br />6/13/2024</Stack>
        <Notice>
          <svg width="34" height="50"><path fill="#fff" d="M0 15h20v17h-10l-5 4v-4H0z" /><path stroke="#1b2741" strokeWidth="1.500" d="M4 20h12M4 24h12M4 28h8" /><circle cx="20" cy="34" r="10" fill="#333943" stroke="#79808c" /><text x="20" y="39.500" textAnchor="middle" fontSize="15" fill="#fff" fontFamily="Open Sans">1</text></svg>
        </Notice>
      </Taskbar>

      <Ink width="1920" height="1080" fill="none" stroke="#e71c1c" strokeWidth="5.200" strokeLinecap="round" strokeLinejoin="round">
        {strokes.map((s, i) => <path key={i} d={smooth(s)} />)}
      </Ink>
    </Screen>
  );
}
